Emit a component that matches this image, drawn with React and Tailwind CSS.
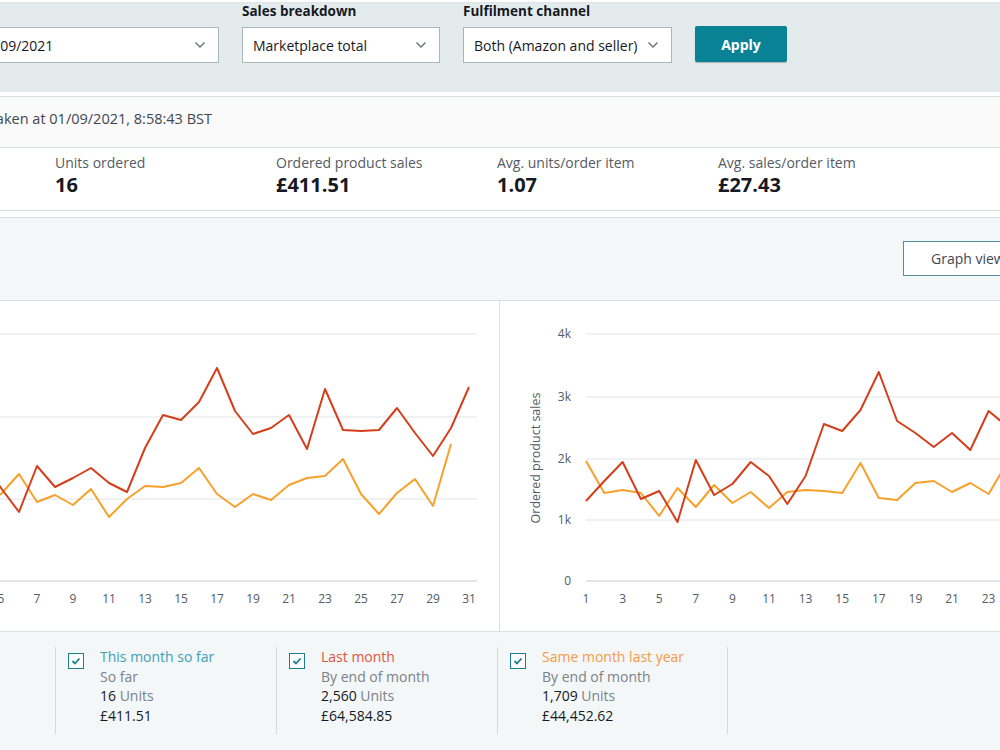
import React from "react";

// daily series, y in px inside each chart svg
const leftRed = [170, 150, 175, 160, 187, 211, 165, 186, 177, 167, 182, 191, 147, 114, 119, 101, 67, 110, 133, 127, 114, 148, 88, 129, 130, 129, 107, 132, 155, 127, 86];
const leftOrange = [185, 195, 180, 200, 193, 173, 201, 194, 204, 188, 216, 198, 185, 186, 182, 167, 193, 206, 193, 199, 184, 177, 175, 158, 193, 213, 192, 178, 205, 143];
const rightRed = [200, 180, 161, 198, 190, 221, 159, 194, 183, 161, 175, 203, 175, 123, 130, 109, 71, 120, 132, 146, 132, 149, 110, 125, 130, 125, 115, 140, 150, 120, 100];
const rightOrange = [160, 192, 189, 192, 215, 187, 206, 184, 202, 191, 207, 191, 189, 190, 192, 162, 197, 199, 182, 180, 191, 182, 193, 162, 190, 200, 185, 195, 190, 170, 150];

const pts = (arr, x0, step) => arr.map((y, i) => `${x0 + i * step},${y}`).join(" ");

const days = Array.from({ length: 16 }, (_, i) => i * 2 + 1);

const Chevron = () => (
  <svg width="12" height="8" viewBox="0 0 12 8" className="shrink-0">
    <polyline points="1.5,1.5 6,6 10.5,1.5" fill="none" stroke="#687078" strokeWidth="1.4" />
  </svg>
);

const Select = ({ label, value, width }) => (
  <div className="flex flex-col" style={{ width }}>
    <div className="text-[13.5px] leading-[16px] font-bold text-[#16191f] whitespace-nowrap">{label}</div>
    <div className="mt-[8px] h-[36px] bg-white border border-[#aab7b8] flex items-center justify-between pl-[10px] pr-[12px]">
      <span className="text-[14px] text-[#16191f] whitespace-nowrap">{value}</span>
      <Chevron />
    </div>
  </div>
);

const Metric = ({ label, value }) => (
  <div className="w-[221px] shrink-0">
    <div className="text-[14px] leading-[18px] text-[#545b64] whitespace-nowrap">{label}</div>
    <div className="text-[20px] leading-[26px] font-bold text-[#16191f] whitespace-nowrap">{value}</div>
  </div>
);

const LegendItem = ({ title, color, sub, units, amount, last }) => (
  <div className={`w-[221px] shrink-0 border-l border-[#d5dbdb] pl-[12px] flex gap-[16px] pb-[9px] ${last ? "border-r w-[231px]" : ""}`}>
    <div className="mt-[6px] w-[16px] h-[16px] border-[1.5px] border-[#1a7f8f] bg-white flex items-center justify-center shrink-0">
      <svg width="10" height="8" viewBox="0 0 10 8">
        <polyline points="1.5,4 4,6.5 8.5,1.5" fill="none" stroke="#1a7f8f" strokeWidth="1.8" />
      </svg>
    </div>
    <div className="text-[14px] leading-[19.5px] whitespace-nowrap">
      <div style={{ color }}>{title}</div>
      <div className="text-[#7b8289]">{sub}</div>
      <div className="text-[#16191f]">
        {units} <span className="text-[#7b8289]">Units</span>
      </div>
      <div className="text-[#16191f]">{amount}</div>
    </div>
  </div>
);

const LeftChart = () => (
  <svg width="700" height="330" className="block">
    {[33, 116, 198].map((y) => (
      <line key={y} x1="120" x2="677" y1={y} y2={y} stroke="#eaedef" strokeWidth="1.5" />
    ))}
    <line x1="120" x2="677" y1="280" y2="280" stroke="#d5dbdf" strokeWidth="1.5" />
    {days.map((d) => (
      <text key={d} x={18 * d + 111} y="302" textAnchor="middle" fontSize="12" fill="#545b64">
        {d}
      </text>
    ))}
    <polyline points={pts(leftOrange, 129, 18)} fill="none" stroke="#f7a12b" strokeWidth="2" strokeLinejoin="round" />
    <polyline points={pts(leftRed, 129, 18)} fill="none" stroke="#d33f1b" strokeWidth="2" strokeLinejoin="round" />
  </svg>
);

const RightChart = () => (
  <svg width="559" height="330" className="block">
    {[
      [33, "4k"],
      [96, "3k"],
      [158, "2k"],
      [219, "1k"],
    ].map(([y, t]) => (
      <g key={t}>
        <line x1="86" x2="559" y1={y} y2={y} stroke="#eaedef" strokeWidth="1.5" />
        <text x="71" y={y + 4} textAnchor="end" fontSize="12" fill="#545b64">
          {t}
        </text>
      </g>
    ))}
    <line x1="86" x2="559" y1="280" y2="280" stroke="#d5dbdf" strokeWidth="1.5" />
    <text x="71" y="284" textAnchor="end" fontSize="12" fill="#545b64">0</text>
    <text x="40" y="157" textAnchor="middle" fontSize="12.5" fill="#545b64" transform="rotate(-90 40 157)">
      Ordered product sales
    </text>
    {days.map((d) => (
      <text key={d} x={86 + (d - 1) * 18.3} y="302" textAnchor="middle" fontSize="12" fill="#545b64">
        {d}
      </text>
    ))}
    <polyline points={pts(rightOrange, 86, 18.3)} fill="none" stroke="#f7a12b" strokeWidth="2" strokeLinejoin="round" />
    <polyline points={pts(rightRed, 86, 18.3)} fill="none" stroke="#d33f1b" strokeWidth="2" strokeLinejoin="round" />
  </svg>
);

export default function App() {
  return (
    <div className="w-[1000px] h-[750px] overflow-hidden bg-white font-['Open_Sans',sans-serif]">
      <div className="-ml-[200px] w-[1260px]">
        {/* filters */}
        <div className="pt-[2px]">
          <div className="h-[90px] border-t border-[#dfe5e6] bg-[#e4ebec] flex items-start gap-[23px] pl-[168px]">
            <Select label="Date" value="01/09/2021" width={251} />
            <Select label="Sales breakdown" value="Marketplace total" width={198} />
            <Select label="Fulfilment channel" value="Both (Amazon and seller)" width={209} />
            <button className="mt-[23px] w-[92px] h-[36px] rounded-[2px] bg-[#0a8296] text-white text-[14px] font-bold shadow-[0_1px_1px_rgba(0,0,0,0.25)]">
              Apply
            </button>
          </div>
        </div>

        {/* snapshot time */}
        <div className="mt-[4px] h-[52px] border-y border-[#dadfe0] bg-[#fafafa] pt-[12px] pl-[86px]">
          <div className="text-[14.5px] leading-[20px] text-[#414750] whitespace-nowrap">
            Sales snapshot taken at 01/09/2021, 8:58:43 BST
          </div>
        </div>

        {/* metrics */}
        <div className="h-[63px] border-b border-[#dadfe0] flex pl-[34px] pt-[6px]">
          <Metric label="Total order items" value="15" />
          <Metric label="Units ordered" value="16" />
          <Metric label="Ordered product sales" value="£411.51" />
          <Metric label="Avg. units/order item" value="1.07" />
          <Metric label="Avg. sales/order item" value="£27.43" />
        </div>

        <div className="mt-[6px] h-[83px] border-t border-[#dadfe0] bg-[#f4f7f8] flex justify-end pr-[37px] pt-[23px]">
          <button className="w-[120px] h-[35px] bg-white border border-[#4f8f99] text-[14px] text-[#414750] text-left pl-[27px] whitespace-nowrap">
            Graph view
          </button>
        </div>

        {/* charts */}
        <div className="flex border-t border-[#dadfe0] bg-white">
          <div className="w-[700px] border-r border-[#dadfe0]">
            <LeftChart />
          </div>
          <div className="flex-1">
            <RightChart />
          </div>
        </div>

        {/* legend */}
        <div className="h-[130px] border-t border-[#dadfe0] bg-[#f3f7f8] flex pl-[255px] pt-[15px] items-start">
          <LegendItem title="This month so far" color="#3f9fb4" sub="So far" units="16" amount="£411.51" />
          <LegendItem title="Last month" color="#e2543a" sub="By end of month" units="2,560" amount="£64,584.85" />
          <LegendItem title="Same month last year" color="#f79a48" sub="By end of month" units="1,709" amount="£44,452.62" last />
        </div>
      </div>
    </div>
  );
}
